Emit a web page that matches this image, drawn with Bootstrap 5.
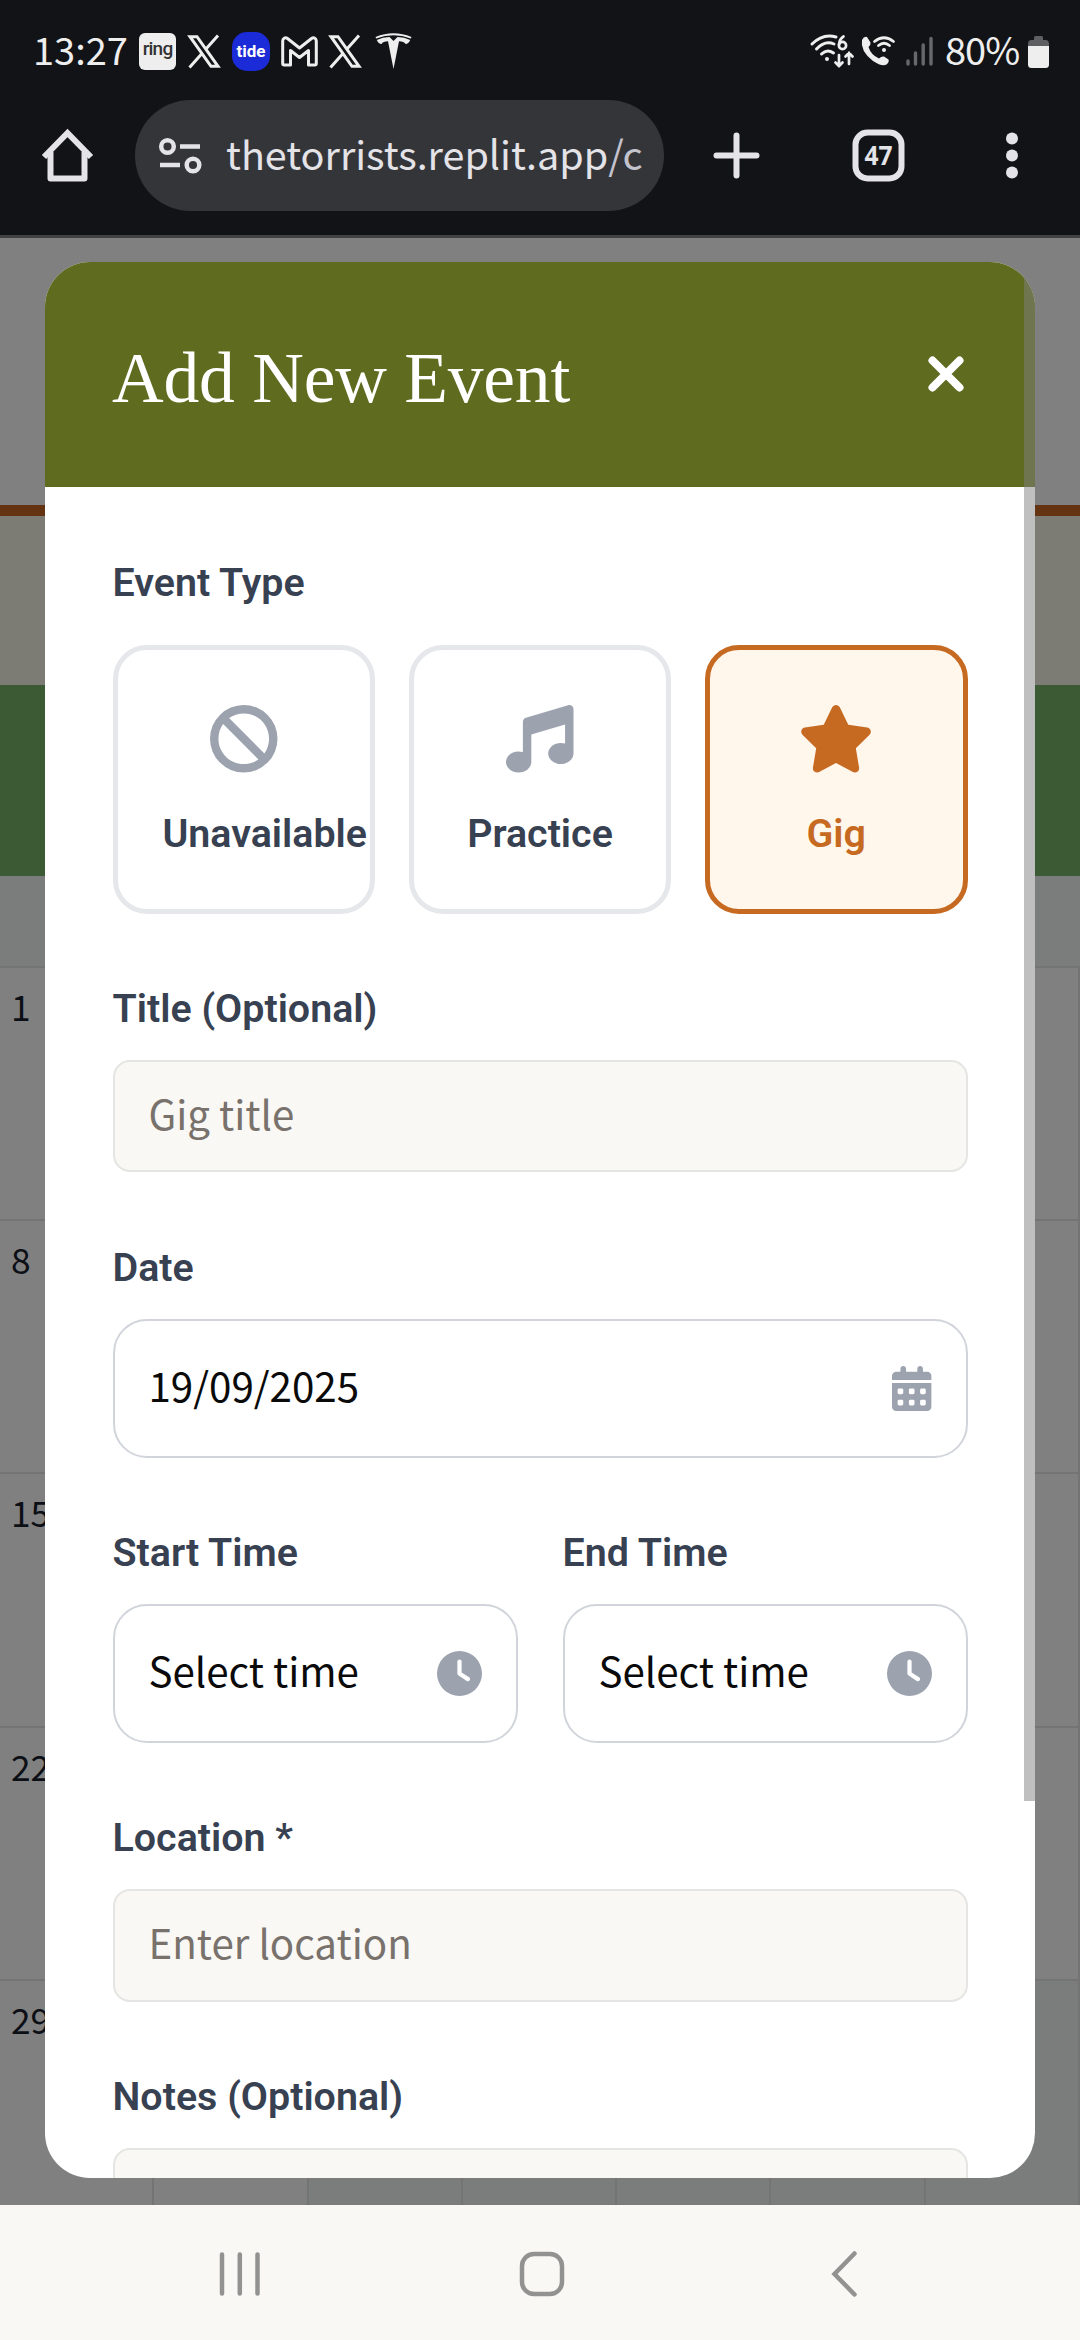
<!DOCTYPE html>
<html lang="en">
<head>
<meta charset="utf-8">
<meta name="viewport" content="width=device-width, initial-scale=1">
<title>Add New Event</title>
<link href="https://cdn.jsdelivr.net/npm/bootstrap@5.3.0/dist/css/bootstrap.min.css" rel="stylesheet">
<style>
  html, body { height: 2340px; overflow: hidden; }
  body { font-family: Roboto, "Liberation Sans", sans-serif; background: #808080; }
  svg { display: block; flex: none; overflow: visible; }

  .sys-top { height: 235px; background: #121317; color: #e4e3e8; }
  .statusline { height: 100px; padding: 2px 31px 0 33px; color: #eee; }
  .stat-text { font: 400 38px/54px "Noto Sans CJK SC", sans-serif; white-space: nowrap; margin-bottom: 5px; }
  .clock-text { width: 106px; }
  .batt-text { width: 83px; margin-left: 11px; letter-spacing: -1px; }
  .ring-badge { width: 37px; height: 37px; border-radius: 6px; background: #eee; color: #333; font-size: 19px; font-weight: 500; line-height: 32px; letter-spacing: -.8px; }
  .g6 { margin-left: 6px; }
  .g9 { margin-left: 9px; }
  .g11 { margin-left: 11px; }
  .toolbar-row { height: 111px; }
  .home-ico { margin-left: 41px; }
  .plus-ico { margin-left: 49px; }
  .tabs-ico { margin-left: 92px; }
  .dots-ico { margin-left: 101px; }
  .omni { width: 529px; height: 111px; margin-left: 41px; padding-left: 24px; background: #343539; }
  .omni-url { font: 400 39.5px/1 "Noto Sans CJK SC", sans-serif; margin-left: 24px; margin-bottom: 6px; white-space: nowrap; }
  .omni-path { color: #c3c3cd; }

  .site { height: 1970px; border-top: 3px solid #424242; }
  .site-head { height: 278px; border-bottom: 11px solid #643311; }
  .site-intro { height: 169px; background: #7c7c75; }
  .site-month { height: 191px; background: #3c5b35; }
  .site-days { height: 90px; background: #7a7d7b; }
  .weeks { display: grid; grid-template-columns: repeat(7, 1fr); grid-auto-rows: 253.2px; border-top: 2px solid #747474; }
  .day { border-right: 2px solid #747474; border-bottom: 2px solid #747474; padding: 10px 0 0 11px; font: 400 35.3px/56px "Noto Sans CJK SC", sans-serif; color: #0c0f15; }
  .day-out { background: #7a7d7b; }

  .sheet { left: 45px; top: 262px; width: 990px; height: 1916px; border-radius: 45px; overflow: hidden; background: #fff; }
  .sheet-head { height: 225px; padding: 0 70px 0 67px; background: #5f6b1f; }
  .sheet-title { font: 400 71.5px/1 "Liberation Serif", serif; letter-spacing: -.2px; padding-top: 7px; }
  .close-ico { margin-bottom: 2px; }
  .sheet-body { padding: 67.5px 67.5px 0; gap: 67.5px; }
  .lbl { font-size: 39.4px; line-height: 56.25px; font-weight: 600; color: #374151; margin-bottom: 22.5px; }
  .kinds { display: grid; grid-template-columns: repeat(3, minmax(0, 1fr)); gap: 33.75px; padding-top: 11.25px; }
  .kind { height: 269px; border: 5px solid #e5e7eb; border-radius: 34px; padding: 55px 45px 0; color: #9ca3af; }
  .kind-name { font-size: 39.4px; line-height: 56px; font-weight: 600; color: #374151; margin-top: 34px; }
  .kind.active { border-color: #c66a22; background: #fff6ec; color: #c66a22; }
  .kind.active .kind-name { color: #c66a22; }
  .entry { height: 112.5px; border: 2px solid #e5e5e3; border-radius: 17px; background: #f9f8f4; padding: 0 34px 7px; font: 400 40.3px/1 "Noto Sans CJK SC", sans-serif; }
  .entry::placeholder { color: #78716c; opacity: 1; }
  .picker { height: 139px; border: 2px solid #d1d5db; border-radius: 34px; background: #fff; padding: 0 34px; color: #9ca3af; }
  .picker span { font: 400 40.3px/1 "Noto Sans CJK SC", sans-serif; color: #0a0a0a; margin-bottom: 6px; }
  .pair { gap: 45px; }
  .thumb { right: 0; top: 0; width: 11px; height: 1539px; background: rgba(128,128,128,.5); }

  .sys-nav { height: 135px; background: #f9f8f4; padding: 2px 221px 0 219px; }
  .nav-home { margin-right: 7px; }
</style>
</head>
<body class="m-0 position-relative">
<header class="sys-top">
  <div class="statusline d-flex align-items-center">
    <span class="stat-text clock-text">13:27</span>
    <span class="ring-badge text-center">ring</span>
    <svg class="ms-2" width="42" height="33" viewBox="0 0 42 33" fill="none" stroke="#eee" stroke-width="3"><path d="M6 1.700H13L34 31.300H27ZM34 .5 21.500 14.500M17.500 19 5.500 32.500"/></svg>
    <svg class="g6" width="38" height="39" viewBox="0 0 38 39"><rect width="38" height="39" rx="15" fill="#1c2bd8"/><text x="19" y="25" text-anchor="middle" font-family="Roboto" font-weight="700" font-size="16" textLength="29" lengthAdjust="spacingAndGlyphs" fill="#fff">tide</text></svg>
    <svg class="g11" width="37" height="31" viewBox="0 0 37 31" fill="none" stroke="#eee" stroke-width="3" stroke-linejoin="round"><path d="M1.700 5C1.700 2 4.500 1 6.500 2.500L18.500 12 30.500 2.500C32.500 1 35.300 2 35.300 5V27.500Q35.300 29 33.800 29H27.500V14.500L18.500 21.500 9.500 14.500V29H3.200Q1.700 29 1.700 27.500Z"/></svg>
    <svg class="g6" width="42" height="33" viewBox="0 0 42 33" fill="none" stroke="#eee" stroke-width="3"><path d="M7 1.700H14L35 31.300H28ZM35 .5 22.500 14.500M18.500 19 6.500 32.500"/></svg>
    <svg class="g9" width="37" height="36" viewBox="0 0 37 36" fill="#eee"><path d="M.5 4Q18.500-3.500 36.500 4L35.800 5.500Q18.500-1 1.200 5.500ZM1.800 7Q8 4 14.500 4L18.500 8 22.500 4Q29 4 35.200 7 33.500 11 30.500 11 29 8.300 24 8.300L18.500 36 13 8.300Q8 8.300 6.500 11 3.500 11 1.800 7Z"/></svg>

    <svg class="ms-auto" width="45" height="34" viewBox="0 0 45 34" fill="none" stroke="#eee" stroke-width="3" stroke-linecap="round"><path d="M2 10Q13-1 26 3M6.500 15Q15 6 24 10M11.500 20Q17 14.500 23.500 19"/><circle cx="17" cy="25" r="2" fill="#eee" stroke="none"/><path d="M29 21V32M25.500 28.500 29 32 32.500 28.500M39 30V19M35.500 22.500 39 19 42.500 22.500" stroke-width="2.700"/><circle cx="32.500" cy="11.500" r="3.600" stroke-width="2.700"/><path d="M29 10.500Q29.500 5 33.500 2.500" stroke-width="2.700"/></svg>
    <svg class="g6" width="35" height="30" viewBox="0 0 35 30"><path fill="#eee" d="M1 4Q3 0 6 1L9.500 6.500Q10 9 7.500 11 10 19 18 22.500 20.500 20 23 20.500L27.500 23.500Q28.500 26 25.500 28.500 21 31 12 25-1 15 1 4Z"/><g fill="none" stroke="#eee" stroke-width="2.800" stroke-linecap="round"><path d="M13.500 5.500Q23-2 32.500 5.500M17.500 9.500Q23 5 28.500 9.500"/></g><circle cx="23" cy="14" r="2" fill="#eee"/></svg>
    <svg class="g9" width="29" height="30" viewBox="0 0 29 30" stroke="#67686b" stroke-width="3.400" stroke-linecap="round"><path d="M3 25V28M10.500 17V28M18.200 9V28M26 2.500V28"/></svg>
    <span class="stat-text batt-text">80%</span>
    <svg width="21" height="33" viewBox="0 0 21 33"><path d="M6 5V2.500Q6 1 7.500 1H13.500Q15 1 15 2.500V5H17.500Q21 5 21 9V14H0V9Q0 5 3.500 5Z" fill="#5e5f62"/><path d="M0 11H21V29.500Q21 33 17.500 33H3.500Q0 33 0 29.500Z" fill="#eee"/></svg>
  </div>
  <div class="toolbar-row d-flex align-items-center">
    <svg class="home-ico" width="53" height="53" viewBox="0 0 53 53" fill="none" stroke="#e4e3e8" stroke-width="6" stroke-linejoin="round"><path d="M3 28 26.500 4 50 28" stroke-linejoin="miter"/><path d="M9.500 23V49.500H43.500V23"/></svg>
    <div class="omni rounded-pill d-flex align-items-center">
      <svg width="43" height="38" viewBox="0 0 43 38" fill="none" stroke="#e4e3e8" stroke-width="4.500"><circle cx="8.500" cy="9.500" r="6.300"/><circle cx="34" cy="28" r="6.300"/><path d="M21 9.500H41M1 28H21"/></svg>
      <span class="omni-url">thetorrists.replit.app<span class="omni-path">/c</span></span>
    </div>
    <svg class="plus-ico" width="47" height="47" viewBox="0 0 47 47" stroke="#e4e3e8" stroke-width="6" stroke-linecap="round"><path d="M23.500 3.500V43.500M3.500 23.500H43.500"/></svg>
    <svg class="tabs-ico" width="53" height="53" viewBox="0 0 53 53"><rect x="3.500" y="3.500" width="46" height="46" rx="12" fill="none" stroke="#e4e3e8" stroke-width="6"/><text x="26.500" y="35.500" text-anchor="middle" font-family="Noto Sans" font-weight="700" font-size="26" textLength="28" lengthAdjust="spacingAndGlyphs" fill="#e4e3e8">47</text></svg>
    <svg class="dots-ico" width="12" height="47" viewBox="0 0 12 47" fill="#e4e3e8"><circle cx="6" cy="6.500" r="6"/><circle cx="6" cy="23.500" r="6"/><circle cx="6" cy="40.500" r="6"/></svg>
  </div>
</header>

<main class="site overflow-hidden">
  <div class="site-head"></div>
  <div class="site-intro"></div>
  <div class="site-month"></div>
  <div class="site-days"></div>
  <div class="weeks">
    <div class="day">1</div><div class="day"></div><div class="day"></div><div class="day"></div><div class="day"></div><div class="day"></div><div class="day"></div>
    <div class="day">8</div><div class="day"></div><div class="day"></div><div class="day"></div><div class="day"></div><div class="day"></div><div class="day"></div>
    <div class="day">15</div><div class="day"></div><div class="day"></div><div class="day"></div><div class="day"></div><div class="day"></div><div class="day"></div>
    <div class="day">22</div><div class="day"></div><div class="day"></div><div class="day"></div><div class="day"></div><div class="day"></div><div class="day"></div>
    <div class="day">29</div><div class="day"></div><div class="day day-out"></div><div class="day day-out"></div><div class="day day-out"></div><div class="day day-out"></div><div class="day day-out"></div>
  </div>
</main>

<nav class="sys-nav d-flex align-items-center justify-content-between">
  <svg width="40" height="46" viewBox="0 0 40 46" stroke="#929290" stroke-width="4.500" stroke-linecap="round"><path d="M3 3.500V42.500M20.800 3.500V42.500M38.500 3.500V42.500"/></svg>
  <svg class="nav-home" width="46" height="46" viewBox="0 0 46 46" fill="none" stroke="#929290" stroke-width="4.500"><rect x="3" y="3" width="40" height="40" rx="12"/></svg>
  <svg width="28" height="48" viewBox="0 0 28 48" fill="none" stroke="#929290" stroke-width="4.500" stroke-linecap="round"><path d="M23.500 3.500 3.500 24 23.500 44.500"/></svg>
</nav>

<div class="sheet position-absolute" role="dialog" aria-label="Add New Event">
  <div class="sheet-head d-flex align-items-center justify-content-between text-white">
    <h2 class="sheet-title m-0">Add New Event</h2>
    <svg class="close-ico" width="38" height="38" viewBox="0 0 38 38" stroke="#fff" stroke-width="8" stroke-linecap="round"><path d="M5.500 5.500 32.500 32.500M32.500 5.500 5.500 32.500"/></svg>
  </div>
  <form class="sheet-body d-flex flex-column">
    <div>
      <div class="lbl">Event Type</div>
      <div class="kinds">
        <div class="kind d-flex flex-column align-items-center">
          <svg width="67.500" height="67.500" viewBox="0 0 512 512" fill="currentColor"><path d="M367.200 412.500L99.500 144.800C77.100 176.100 64 214.500 64 256c0 106 86 192 192 192c41.500 0 79.900-13.100 111.200-35.500zm45.300-45.300C434.900 335.900 448 297.500 448 256c0-106-86-192-192-192c-41.500 0-79.900 13.100-111.200 35.500L412.500 367.200zM0 256a256 256 0 1 1 512 0A256 256 0 1 1 0 256z"/></svg>
          <span class="kind-name align-self-start">Unavailable</span>
        </div>
        <div class="kind d-flex flex-column align-items-center">
          <svg width="67.500" height="67.500" viewBox="0 0 512 512" fill="currentColor"><path d="M499.100 6.300c8.100 6 12.900 15.600 12.900 25.700v72V368c0 44.200-43 80-96 80s-96-35.800-96-80s43-80 96-80c11.200 0 22 1.600 32 4.600V147L192 223.800V432c0 44.200-43 80-96 80s-96-35.800-96-80s43-80 96-80c11.200 0 22 1.600 32 4.600V200 128c0-14.100 9.300-26.600 22.800-30.700l320-96c9.700-2.900 20.200-1.100 28.300 5z"/></svg>
          <span class="kind-name">Practice</span>
        </div>
        <div class="kind active d-flex flex-column align-items-center">
          <svg width="76" height="67.500" viewBox="0 0 576 512" fill="currentColor"><path d="M316.900 18C311.600 7 300.400 0 288.100 0s-23.400 7-28.800 18L195 150.300 51.400 171.500c-12 1.800-22 10.200-25.700 21.700s-.7 24.200 7.900 32.700L137.800 329 113.200 474.700c-2 12 3 24.200 12.900 31.300s23 8 33.800 2.300l128.300-68.500 128.300 68.500c10.800 5.700 23.900 4.900 33.800-2.300s14.900-19.300 12.900-31.300L438.500 329 542.700 225.900c8.600-8.500 11.700-21.200 7.900-32.700s-13.700-19.900-25.700-21.700L381.200 150.300 316.900 18z"/></svg>
          <span class="kind-name">Gig</span>
        </div>
      </div>
    </div>
    <div>
      <label class="lbl d-block" for="evTitle">Title (Optional)</label>
      <input class="entry form-control" id="evTitle" type="text" placeholder="Gig title">
    </div>
    <div>
      <div class="lbl">Date</div>
      <div class="picker d-flex align-items-center justify-content-between">
        <span>19/09/2025</span>
        <svg width="39.400" height="45" viewBox="0 0 448 512" fill="currentColor"><path d="M128 0c17.700 0 32 14.300 32 32V64H288V32c0-17.700 14.300-32 32-32s32 14.300 32 32V64h48c26.500 0 48 21.500 48 48v48H0V112C0 85.500 21.500 64 48 64H96V32c0-17.700 14.300-32 32-32zM0 192H448V464c0 26.500-21.500 48-48 48H48c-26.500 0-48-21.500-48-48V192zm64 80v32c0 8.800 7.200 16 16 16h32c8.800 0 16-7.200 16-16V272c0-8.800-7.200-16-16-16H80c-8.800 0-16 7.200-16 16zm128 0v32c0 8.800 7.200 16 16 16h32c8.800 0 16-7.200 16-16V272c0-8.800-7.200-16-16-16H208c-8.800 0-16 7.200-16 16zm144-16c-8.800 0-16 7.200-16 16v32c0 8.800 7.200 16 16 16h32c8.800 0 16-7.200 16-16V272c0-8.800-7.200-16-16-16H336zM64 400v32c0 8.800 7.200 16 16 16h32c8.800 0 16-7.200 16-16V400c0-8.800-7.200-16-16-16H80c-8.800 0-16 7.200-16 16zm144-16c-8.800 0-16 7.200-16 16v32c0 8.800 7.200 16 16 16h32c8.800 0 16-7.200 16-16V400c0-8.800-7.200-16-16-16H208zm112 16v32c0 8.800 7.200 16 16 16h32c8.800 0 16-7.200 16-16V400c0-8.800-7.200-16-16-16H336c-8.800 0-16 7.200-16 16z"/></svg>
      </div>
    </div>
    <div class="pair d-flex">
      <div class="flex-fill">
        <div class="lbl">Start Time</div>
        <div class="picker d-flex align-items-center justify-content-between">
          <span>Select time</span>
          <svg width="45" height="45" viewBox="0 0 512 512" fill="currentColor"><path d="M256 0a256 256 0 1 1 0 512A256 256 0 1 1 256 0zM232 120V256c0 8 4 15.500 10.700 20l96 64c11 7.400 25.900 4.400 33.300-6.700s4.400-25.900-6.700-33.300L280 243.200V120c0-13.300-10.700-24-24-24s-24 10.700-24 24z"/></svg>
        </div>
      </div>
      <div class="flex-fill">
        <div class="lbl">End Time</div>
        <div class="picker d-flex align-items-center justify-content-between">
          <span>Select time</span>
          <svg width="45" height="45" viewBox="0 0 512 512" fill="currentColor"><path d="M256 0a256 256 0 1 1 0 512A256 256 0 1 1 256 0zM232 120V256c0 8 4 15.500 10.700 20l96 64c11 7.400 25.900 4.400 33.300-6.700s4.400-25.900-6.700-33.300L280 243.200V120c0-13.300-10.700-24-24-24s-24 10.700-24 24z"/></svg>
        </div>
      </div>
    </div>
    <div>
      <label class="lbl d-block" for="evPlace">Location *</label>
      <input class="entry form-control" id="evPlace" type="text" placeholder="Enter location">
    </div>
    <div>
      <label class="lbl d-block" for="evNotes">Notes (Optional)</label>
      <textarea class="entry form-control" id="evNotes"></textarea>
    </div>
  </form>
  <div class="thumb position-absolute"></div>
</div>
<script src="https://cdn.jsdelivr.net/npm/bootstrap@5.3.0/dist/js/bootstrap.bundle.min.js"></script>
</body>
</html>
